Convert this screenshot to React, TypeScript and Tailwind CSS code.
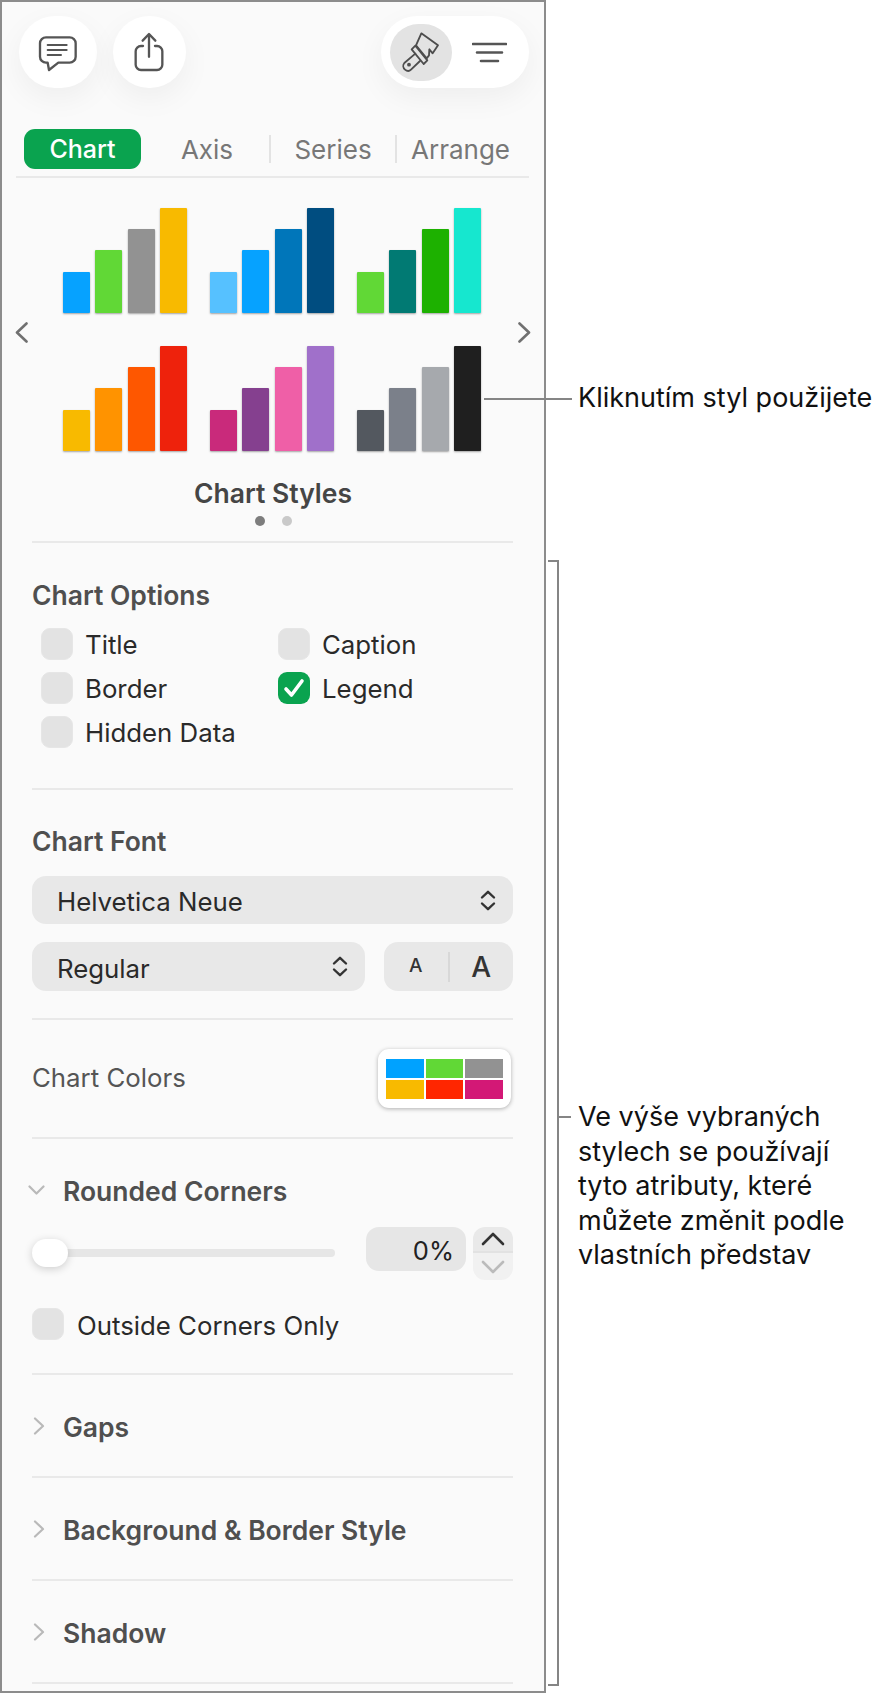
import React from "react";

const heights = ["h-[41px]", "h-[63px]", "h-[84px]", "h-[105px]"];

const chartStyles = [
  ["bg-[#06a2ff]", "bg-[#61d836]", "bg-[#929292]", "bg-[#f8ba00]"],
  ["bg-[#56c1ff]", "bg-[#06a2ff]", "bg-[#0076ba]", "bg-[#004d80]"],
  ["bg-[#61d836]", "bg-[#017a73]", "bg-[#1db100]", "bg-[#16e7cf]"],
  ["bg-[#f8ba00]", "bg-[#ff9300]", "bg-[#fe5700]", "bg-[#ee220c]"],
  ["bg-[#c92a7b]", "bg-[#85408f]", "bg-[#ef5fa7]", "bg-[#a070ca]"],
  ["bg-[#53585f]", "bg-[#7b808a]", "bg-[#a6a9ad]", "bg-[#1f1f1f]"],
];

function Divider() {
  return <div className="h-[2px] bg-[#e9e9e9]" />;
}

function Heading({ children }: { children: React.ReactNode }) {
  return <div className="h-[32px] text-[26.5px] font-semibold leading-[32px] text-[#4f4f4f]">{children}</div>;
}

function UpDown() {
  return (
    <svg width="16" height="21" viewBox="0 0 16 21" fill="none" stroke="#333" strokeWidth="2.4" strokeLinecap="round" strokeLinejoin="round">
      <path d="M2 7.5 8 1.8l6 5.7M2 13.5l6 5.7 6-5.7" />
    </svg>
  );
}

function Checkbox({ label, checked }: { label?: string; checked?: boolean }) {
  return (
    <div className="flex h-[32px] items-center text-[25.8px] text-[#2a2a2a]">
      <div className={`flex h-[32px] w-[32px] items-center justify-center rounded-[9px] ${checked ? "bg-[#0aa34f]" : "border border-[#e6e6e6] bg-[#e3e3e3]"}`}>
        {checked && (
          <svg width="22" height="20" viewBox="0 0 22 20" fill="none" stroke="#fff" strokeWidth="3.6" strokeLinecap="round" strokeLinejoin="round">
            <path d="M3 11l5.5 6L19 3" />
          </svg>
        )}
      </div>
      <span className="ml-[12px] pt-[3px]">{label}</span>
    </div>
  );
}

function Collapsed({ label }: { label: string }) {
  return (
    <>
      <div className="flex h-[101px] items-center">
        <svg width="12" height="18" viewBox="0 0 12 18" fill="none" stroke="#b9b9b9" strokeWidth="2.2" strokeLinecap="round" strokeLinejoin="round" className="ml-[1px]">
          <path d="M2 1.5 10 9l-8 7.5" />
        </svg>
        <span className="ml-[18px] pt-[4px] text-[26.5px] font-semibold text-[#4f4f4f]">{label}</span>
      </div>
      <Divider />
    </>
  );
}

function Toolbar() {
  return (
    <div className="flex justify-between pl-[17px] pr-[15px] pt-[14px]">
      <div className="flex gap-[16px]">
        <button className="h-[72px] w-[78px] rounded-full bg-white shadow-[0_10px_30px_rgba(0,0,0,0.05)]">
          <svg className="h-full w-full" viewBox="-18 -12 234 216" fill="none" stroke="#555" strokeWidth="7" strokeLinecap="round" strokeLinejoin="round">
            <path d="M63 52h71a18 18 0 0 1 18 18v40a18 18 0 0 1-18 18h-34l-28 22-4-22h-5a18 18 0 0 1-18-18V70a18 18 0 0 1 18-18z" />
            <path d="M68 75h57M68 90h57M68 105h40" strokeWidth="6" />
          </svg>
        </button>
        <button className="h-[72px] w-[73px] rounded-full bg-white shadow-[0_10px_30px_rgba(0,0,0,0.05)]">
          <svg className="h-full w-full" viewBox="264 -12 219 216" fill="none" stroke="#555" strokeWidth="7" strokeLinecap="round" strokeLinejoin="round">
            <path d="M354 78h-6a16 16 0 0 0-16 16v40a16 16 0 0 0 16 16h48a16 16 0 0 0 16-16V94a16 16 0 0 0-16-16h-6" />
            <path d="M372 110V44M353 62l19-20 19 20" />
          </svg>
        </button>
      </div>
      <div className="flex h-[72px] w-[148px] items-center rounded-full bg-white pl-[9px] shadow-[0_10px_30px_rgba(0,0,0,0.05)]">
        <div className="h-[57px] w-[62px] rounded-full bg-[#e3e3e3]">
          <svg className="h-full w-full" viewBox="30 12 186 171" fill="none" stroke="#4d4d4d" strokeWidth="5.5" strokeLinecap="round" strokeLinejoin="round">
            <path d="M108 76l16-36 50 36-16 24-10-12-1 18-7 9z" />
            <path d="M95 88l11-11 36 44-11 11z" />
            <path d="M106 101l-33 28c-5 6-4 15 2 20 6 5 13 5 18 0l27-26" />
            <circle cx="87" cy="134" r="3" />
          </svg>
        </div>
        <svg className="ml-[20px]" width="35" height="21" viewBox="0 0 35 21" fill="none" stroke="#555" strokeWidth="2.6" strokeLinecap="round">
          <path d="M1 2h33M5 10.5h25M9 19h17" />
        </svg>
      </div>
    </div>
  );
}

function Tabs() {
  return (
    <div className="ml-[14px] mr-[15px] mt-[41px] border-b-2 border-[#e9e9e9] pb-[7px] text-[26px] text-[#777]">
      <div className="flex h-[40px] items-center pl-[8px]">
        <div className="flex h-[40px] w-[117px] items-center justify-center rounded-[11px] bg-[#0aa34f] pt-[2px] text-[25px] font-medium text-white">Chart</div>
        <div className="flex-1 pl-[4px] pt-[1px] text-center">Axis</div>
        <div className="h-[28px] w-[2px] bg-[#e3e3e3]" />
        <div className="w-[124px] pt-[1px] text-center">Series</div>
        <div className="h-[28px] w-[2px] bg-[#e3e3e3]" />
        <div className="w-[127px] pt-[1px] text-center">Arrange</div>
        <div className="w-[5px]" />
      </div>
    </div>
  );
}

function StylePicker() {
  return (
    <div className="pt-[30px]">
      <div className="flex items-center justify-between pl-[13px] pr-[13px]">
        <svg className="mt-[5px]" width="13" height="21" viewBox="0 0 13 21" fill="none" stroke="#707070" strokeWidth="2.6" strokeLinecap="round" strokeLinejoin="round">
          <path d="M11.5 1.5 2 10.5l9.5 9" />
        </svg>
        <div className="-ml-[2px] grid grid-cols-[125px_125px_125px] gap-x-[22px] gap-y-[33px]">
          {chartStyles.map((bars, i) => (
            <div key={i} className="flex h-[105px] items-end justify-between">
              {bars.map((color, j) => (
                <div key={j} className={`w-[27px] rounded-[1px] shadow-[0_1px_2px_rgba(0,0,0,0.35)] ${heights[j]} ${color}`} />
              ))}
            </div>
          ))}
        </div>
        <svg className="mt-[5px]" width="13" height="21" viewBox="0 0 13 21" fill="none" stroke="#707070" strokeWidth="2.6" strokeLinecap="round" strokeLinejoin="round">
          <path d="M1.5 1.5 11 10.5l-9.5 9" />
        </svg>
      </div>
      <div className="mt-[26px] h-[32px] text-center text-[26.5px] font-semibold leading-[32px] text-[#454545]">Chart Styles</div>
      <div className="mt-[7px] flex justify-center gap-[17px]">
        <div className="h-[10px] w-[10px] rounded-full bg-[#7d7d7d]" />
        <div className="h-[10px] w-[10px] rounded-full bg-[#c9c9c9]" />
      </div>
    </div>
  );
}

function Panel() {
  return (
    <div className="h-[1693px] w-[546px] shrink-0 overflow-hidden border-2 border-[#8c8c8c] bg-[#fafafa]">
      <Toolbar />
      <Tabs />
      <StylePicker />
      <div className="ml-[30px] mr-[31px] mt-[15px]">
        <Divider />
        <div className="pt-[36px]">
          <Heading>Chart Options</Heading>
          <div className="mt-[17px] grid grid-cols-[237px_1fr] gap-y-[12px] pl-[9px]">
            <Checkbox label="Title" />
            <Checkbox label="Caption" />
            <Checkbox label="Border" />
            <Checkbox label="Legend" checked />
            <Checkbox label="Hidden Data" />
          </div>
        </div>
        <div className="h-[40px]" />
        <Divider />
        <div className="pt-[35px]">
          <Heading>Chart Font</Heading>
          <div className="mt-[19px] flex h-[48px] items-center justify-between rounded-[14px] bg-[#e8e8e8] pl-[25px] pr-[17px] text-[25.8px] text-[#2a2a2a]">
            <span className="pt-[5px]">Helvetica Neue</span>
            <UpDown />
          </div>
          <div className="mt-[18px] flex gap-[19px]">
            <div className="flex h-[49px] w-[333px] items-center justify-between rounded-[14px] bg-[#e8e8e8] pl-[25px] pr-[17px] text-[25.8px] text-[#2a2a2a]">
              <span className="pt-[5px]">Regular</span>
              <UpDown />
            </div>
            <div className="flex h-[49px] flex-1 items-center rounded-[14px] bg-[#e8e8e8] font-medium text-[#333]">
              <div className="flex-1 text-center text-[19px]">A</div>
              <div className="h-[30px] w-[2px] bg-[#d8d8d8]" />
              <div className="flex-1 text-center text-[28px]">A</div>
            </div>
          </div>
        </div>
        <div className="h-[27px]" />
        <Divider />
        <div className="flex h-[117px] items-center justify-between pr-[2px]">
          <span className="text-[25.8px] text-[#555]">Chart Colors</span>
          <div className="grid h-[59px] w-[133px] grid-cols-[38px_37px_38px] grid-rows-[19px_19px] content-center justify-center gap-[2px] rounded-[11px] bg-white shadow-[0_1px_4px_rgba(0,0,0,0.3)]">
            <div className="bg-[#00a2ff]" />
            <div className="bg-[#61d836]" />
            <div className="bg-[#929292]" />
            <div className="bg-[#f8ba00]" />
            <div className="bg-[#ff2600]" />
            <div className="bg-[#d31876]" />
          </div>
        </div>
        <Divider />
        <div className="pt-[35px]">
          <div className="flex h-[32px] items-center">
            <svg className="-ml-[4px]" width="17" height="10" viewBox="0 0 17 10" fill="none" stroke="#b9b9b9" strokeWidth="2.2" strokeLinecap="round" strokeLinejoin="round">
              <path d="M1.5 1.5 8.5 8.5l7-7" />
            </svg>
            <span className="ml-[18px] pt-[4px] text-[26.5px] font-semibold text-[#4f4f4f]">Rounded Corners</span>
          </div>
          <div className="mt-[21px] flex h-[53px] items-start">
            <div className="relative mt-[12px] flex h-[28px] w-[303px] items-center">
              <div className="h-[8px] w-full rounded-full bg-[#e6e6e6]" />
              <div className="absolute left-0 top-0 h-[28px] w-[36px] rounded-full bg-white shadow-[0_2px_8px_rgba(0,0,0,0.18)]" />
            </div>
            <div className="ml-[31px] flex h-[44px] w-[100px] items-center justify-end rounded-[13px] bg-[#e6e6e6] pr-[12px] pt-[4px] text-[25.5px] text-[#222]">0%</div>
            <div className="ml-[7px] flex h-[53px] w-[40px] flex-col overflow-hidden rounded-[12px]">
              <div className="flex h-[26px] items-center justify-center border-b-2 border-[#e2e2e2] bg-[#e9e9e9]">
                <svg width="24" height="14" viewBox="0 0 24 14" fill="none" stroke="#333" strokeWidth="2.6" strokeLinecap="round" strokeLinejoin="round">
                  <path d="M2 12 12 2l10 10" />
                </svg>
              </div>
              <div className="flex flex-1 items-center justify-center bg-[#f1f1f1]">
                <svg width="24" height="14" viewBox="0 0 24 14" fill="none" stroke="#bbb" strokeWidth="2.6" strokeLinecap="round" strokeLinejoin="round">
                  <path d="M2 2l10 10L22 2" />
                </svg>
              </div>
            </div>
          </div>
          <div className="mt-[28px] flex h-[32px] items-center text-[25.8px] text-[#2a2a2a]">
            <div className="h-[32px] w-[32px] rounded-[9px] border border-[#e6e6e6] bg-[#e3e3e3]" />
            <span className="ml-[13px] pt-[5px]">Outside Corners Only</span>
          </div>
        </div>
        <div className="h-[33px]" />
        <Divider />
        <Collapsed label="Gaps" />
        <Collapsed label="Background & Border Style" />
        <Collapsed label="Shadow" />
      </div>
    </div>
  );
}

function Callouts() {
  return (
    <div className="-ml-[3px] text-[27px] leading-[34.5px] text-[#111]">
      <div className="relative ml-[35px] mt-[381px] h-[35px]">
        <div className="absolute -left-[94px] top-[17px] h-[2px] w-[88px] bg-[#858585]" />
        Kliknutím styl použijete
      </div>
      <div className="ml-[5px] mt-[144px] flex h-[1126px] w-[331px]">
        <div className="h-full w-[11px] shrink-0 border-y-2 border-r-2 border-[#858585]" />
        <div className="flex items-start pt-[556px]">
          <div className="h-[2px] w-[12px] shrink-0 bg-[#858585]" />
          <div className="-mt-[16px] ml-[7px] whitespace-nowrap">
            Ve výše vybraných
            <br />
            stylech se používají
            <br />
            tyto atributy, které
            <br />
            můžete změnit podle
            <br />
            vlastních představ
          </div>
        </div>
      </div>
    </div>
  );
}

export default function App() {
  return (
    <div className="flex h-[1694px] w-[883px] items-start overflow-hidden bg-white font-['Inter',sans-serif]">
      <Panel />
      <Callouts />
    </div>
  );
}
